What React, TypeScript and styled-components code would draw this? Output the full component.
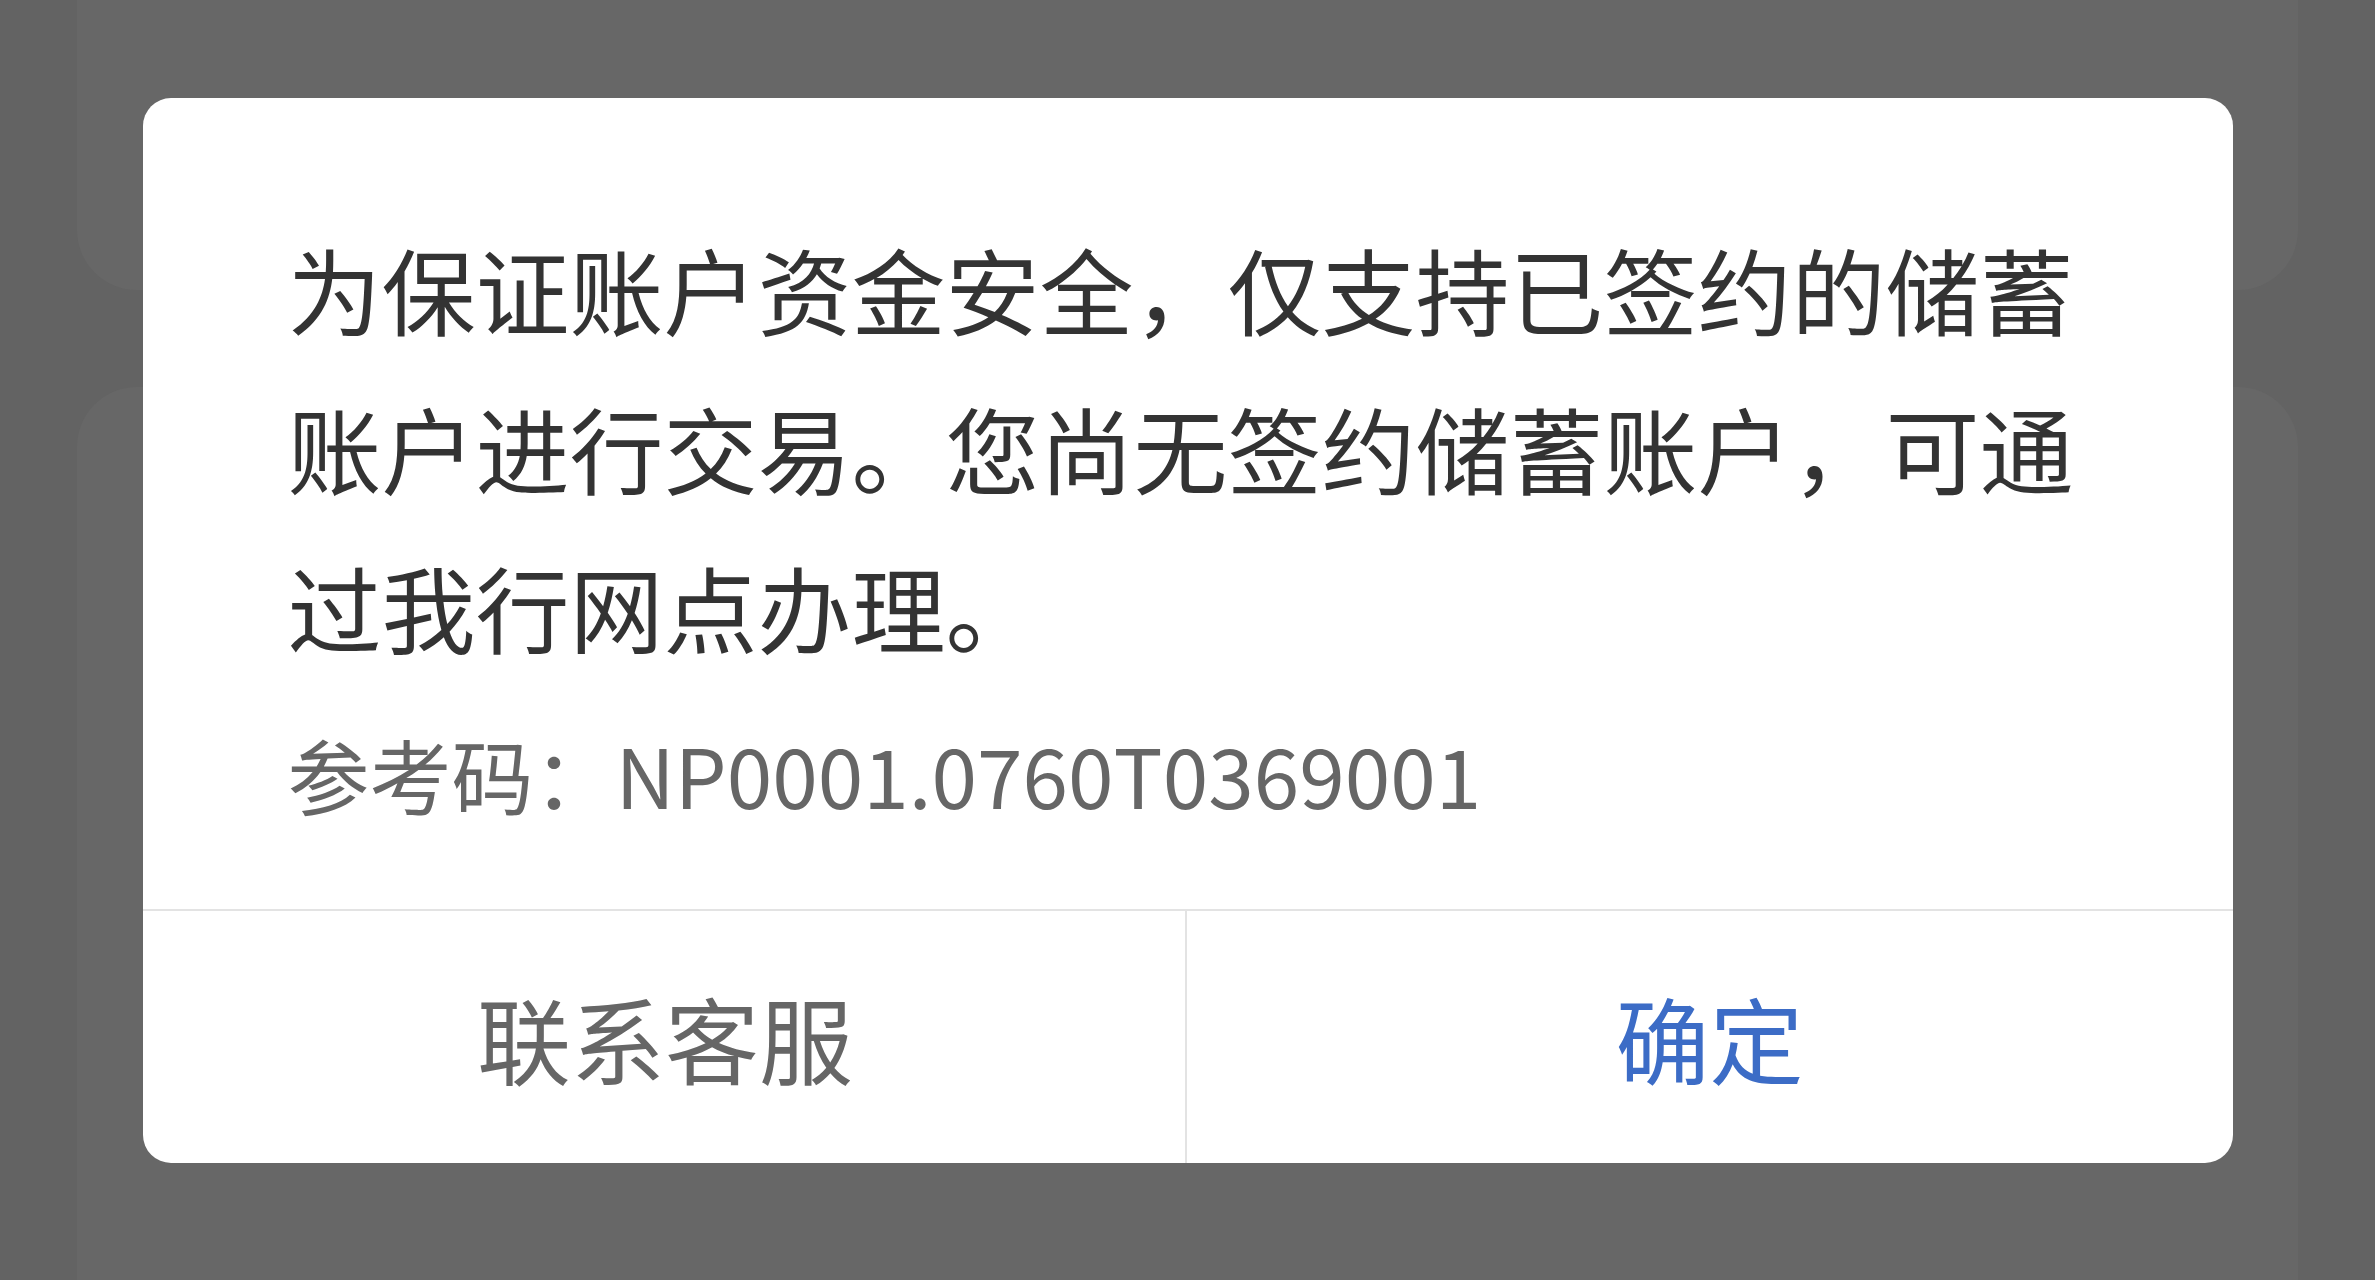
import React from 'react'
import styled, { createGlobalStyle } from 'styled-components'

const GlobalStyle = createGlobalStyle`
  html, body {
    margin: 0;
    padding: 0;
    height: 100%;
    background: #636363;
    overflow: hidden;
  }
  #root {
    height: 100%;
  }
`

const FONT = `"Noto Sans CJK SC", "Noto Sans", sans-serif`

const App: React.FC = () => {
  return (
    <>
      <GlobalStyle />
      <StyledPage>
        <StyledPanel top />
        <StyledPanel />
      </StyledPage>
      <StyledOverlay>
        <StyledDialog>
          <StyledBody>
            <StyledMessage>
              为保证账户资金安全，仅支持已签约的储蓄账户进行交易。您尚无签约储蓄账户，可通过我行网点办理。
            </StyledMessage>
            <StyledRef>参考码：NP0001.0760T0369001</StyledRef>
          </StyledBody>
          <StyledActions>
            <StyledButton>联系客服</StyledButton>
            <StyledButton primary>确定</StyledButton>
          </StyledActions>
        </StyledDialog>
      </StyledOverlay>
    </>
  )
}

const StyledPage = styled.div`
  display: flex;
  flex-direction: column;
  gap: 97px;
  height: 100%;
  padding: 0 77px;
  box-sizing: border-box;
`

const StyledPanel = styled.div<{ top?: boolean }>`
  background: #676767;
  ${(props) =>
    props.top
      ? `height: 290px; border-radius: 0 0 60px 60px;`
      : `flex: 1; border-radius: 60px 60px 0 0;`}
`

const StyledOverlay = styled.div`
  position: fixed;
  inset: 0;
  display: flex;
  justify-content: center;
  align-items: flex-start;
  padding-top: 98px;
`

const StyledDialog = styled.div`
  width: 2090px;
  background: #ffffff;
  border-radius: 28px;
  overflow: hidden;
  font-family: ${FONT};
`

const StyledBody = styled.div`
  padding: 111px 145px 85px;
`

const StyledMessage = styled.p`
  margin: 0;
  font-size: 94px;
  line-height: 159px;
  color: #333333;
`

const StyledRef = styled.p`
  margin: 38px 0 0;
  font-size: 82px;
  line-height: 100px;
  color: #666666;
`

const StyledActions = styled.div`
  display: grid;
  grid-template-columns: 1fr 1fr;
  border-top: 2px solid #e3e3e3;
  height: 252px;
`

const StyledButton = styled.div<{ primary?: boolean }>`
  display: flex;
  align-items: center;
  justify-content: center;
  font-size: 94px;
  color: ${(props) => (props.primary ? '#3c6cc6' : '#666666')};
  & + & {
    border-left: 2px solid #e3e3e3;
    margin-left: -3px;
  }
`

export default App
